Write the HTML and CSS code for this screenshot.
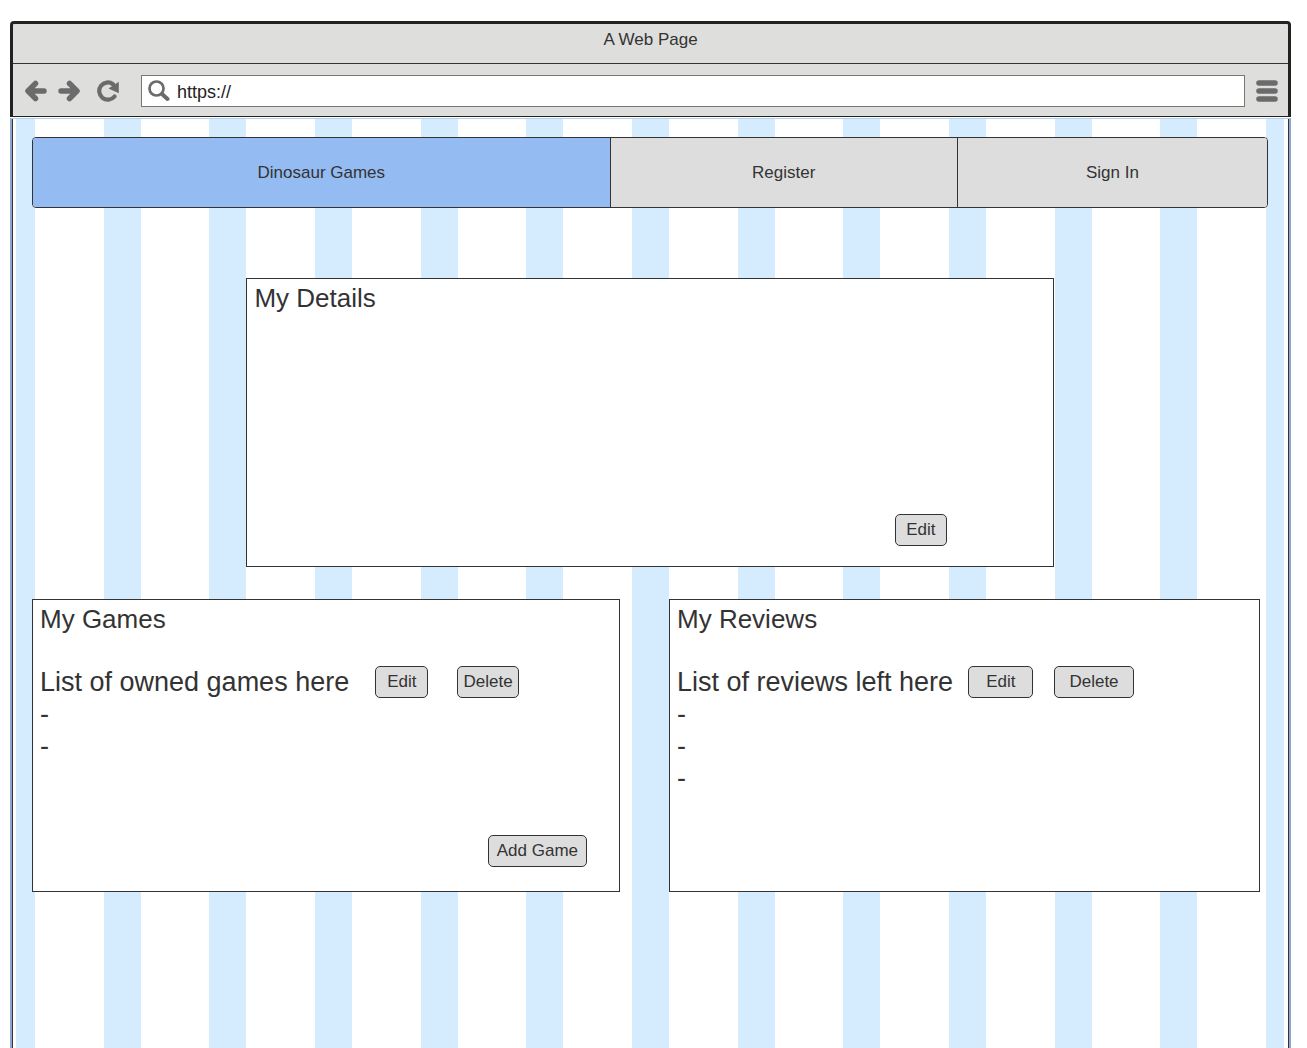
FILE: index.html
```html
<!DOCTYPE html>
<html lang="en">
<head>
<meta charset="utf-8">
<meta name="viewport" content="width=device-width, initial-scale=1">
<title>A Web Page</title>
<link rel="stylesheet" href="styles.css">
</head>
<body>
<div class="browser">
  <header class="chrome">
    <div class="titlebar">A Web Page</div>
    <div class="toolbar">
      <button class="icon-button" type="button" aria-label="Back">
        <svg width="22" height="22" viewBox="0 0 22 22"><path d="M19 11H4M10.500 3.500L3 11L10.500 18.500" fill="none" stroke="#6b6b6b" stroke-width="5.500" stroke-linecap="round" stroke-linejoin="round"/></svg>
      </button>
      <button class="icon-button" type="button" aria-label="Forward">
        <svg width="22" height="22" viewBox="0 0 22 22"><path d="M3 11H18M11.500 3.500L19 11L11.500 18.500" fill="none" stroke="#6b6b6b" stroke-width="5.500" stroke-linecap="round" stroke-linejoin="round"/></svg>
      </button>
      <button class="icon-button reload" type="button" aria-label="Reload">
        <svg width="22" height="22" viewBox="0 0 22 22"><path d="M17.500 16.500A8.600 8.600 0 1 1 16 4.200" fill="none" stroke="#6b6b6b" stroke-width="4.200" stroke-linecap="round"/><path d="M21.800 1.800V13.200L11.500 8.500Z" fill="#6b6b6b"/></svg>
      </button>
      <label class="address">
        <svg width="22" height="22" viewBox="0 0 22 22"><circle cx="8.500" cy="8.500" r="7" fill="none" stroke="#6b6b6b" stroke-width="2.700"/><path d="M14 14L19.500 19" stroke="#6b6b6b" stroke-width="4" stroke-linecap="round"/></svg>
        <input class="address-input" type="text" value="https://" aria-label="Address">
      </label>
      <button class="icon-button" type="button" aria-label="Menu">
        <svg width="22" height="22" viewBox="0 0 22 22"><path d="M3 3H19M3 11H19M3 19H19" stroke="#6b6b6b" stroke-width="5.600" stroke-linecap="round"/></svg>
      </button>
    </div>
  </header>
  <div class="frame">
    <main class="page">
      <nav class="nav">
        <a class="nav-link nav-home" href="#">Dinosaur Games</a>
        <a class="nav-link nav-register" href="#">Register</a>
        <a class="nav-link nav-signin" href="#">Sign In</a>
      </nav>
      <section class="panel details">
        <h2 class="heading">My Details</h2>
        <button class="button details-edit" type="button">Edit</button>
      </section>
      <div class="columns">
        <section class="panel">
          <h2 class="heading">My Games</h2>
          <div class="list-row games-row">
            <p class="list-title">List of owned games here</p>
            <div class="actions games-actions">
              <button class="button" type="button">Edit</button>
              <button class="button button-snug" type="button">Delete</button>
            </div>
          </div>
          <ul class="list">
            <li>-</li>
            <li>-</li>
          </ul>
          <button class="button add-game" type="button">Add Game</button>
        </section>
        <section class="panel">
          <h2 class="heading">My Reviews</h2>
          <div class="list-row reviews-row">
            <p class="list-title">List of reviews left here</p>
            <div class="actions reviews-actions">
              <button class="button button-wide" type="button">Edit</button>
              <button class="button button-roomy" type="button">Delete</button>
            </div>
          </div>
          <ul class="list">
            <li>-</li>
            <li>-</li>
            <li>-</li>
          </ul>
        </section>
      </div>
    </main>
  </div>
</div>
</body>
</html>
```
FILE: styles.css
```css
:root {
  --ink: #333;
  --grey: #ddd;
  --chrome: #dededd;
  --stripe: #d5ecff;
  --edge: #8ca6cd;
}

* {
  box-sizing: border-box;
}

body {
  margin: 0;
  background: #fff;
  color: var(--ink);
  font-family: "Liberation Sans", Arial, sans-serif;
  font-size: 17px;
}

.browser {
  display: flex;
  flex-direction: column;
  min-height: 100vh;
  padding: 21px 16px 0 10px;
}

.chrome {
  background: var(--chrome);
  border: 3px solid #222;
  border-bottom: 1px solid #222;
  border-radius: 4px 4px 0 0;
}

.titlebar {
  height: 40px;
  line-height: 32px;
  text-align: center;
  border-bottom: 1px solid var(--ink);
}

.toolbar {
  display: flex;
  align-items: center;
  height: 52px;
  padding: 2px 10px 0 12px;
  gap: 11px;
}

.icon-button {
  display: flex;
  padding: 0;
  border: 0;
  background: none;
}

.reload {
  margin: 0 11px 0 6px;
}

.address {
  display: flex;
  flex: 1;
  align-items: center;
  gap: 7px;
  height: 32px;
  padding: 0 6px;
  background: #fff;
  border: 1px solid #777;
}

.address-input {
  flex: 1;
  min-width: 0;
  padding: 3px 0 0;
  border: 0;
  background: none;
  color: #222;
  font: inherit;
  font-size: 18px;
}

.frame {
  display: flex;
  flex: 1;
  margin-top: 1px;
  border: solid var(--edge);
  border-width: 1px 2px 0;
  border-top-color: #b5cff0;
  background: linear-gradient(var(--ink), var(--ink)) left / 1px 100% no-repeat,
    linear-gradient(var(--ink), var(--ink)) right / 1px 100% no-repeat;
  padding: 0 5px 0 4px;
}

.page {
  flex: 1;
  min-width: 0;
  padding: 18px 16px 32px;
  background: repeating-linear-gradient(
    to right,
    var(--stripe) 0 19px,
    #fff 19px calc(100% / 12 - 18px),
    var(--stripe) calc(100% / 12 - 18px) calc(100% / 12)
  );
}

.nav {
  display: flex;
  border: 1px solid var(--ink);
  border-radius: 4px;
  overflow: hidden;
}

.nav-link {
  height: 69px;
  line-height: 69px;
  text-align: center;
  color: inherit;
  text-decoration: none;
  background: var(--grey);
}

.nav-link + .nav-link {
  border-left: 1px solid var(--ink);
}

.nav-home {
  flex: 578 0 0;
  background: #94bbf2;
}

.nav-register {
  flex: 347 0 0;
}

.nav-signin {
  flex: 310 0 0;
}

.panel {
  display: flex;
  flex-direction: column;
  min-width: 0;
  min-height: 293px;
  padding: 3px 7px;
  background: #fff;
  border: 1px solid var(--ink);
}

.details {
  width: 65.3%;
  min-height: 289px;
  margin: 70px auto 32px;
}

.heading {
  margin: 0;
  font-size: 26px;
  font-weight: 400;
  line-height: 32px;
}

.columns {
  display: grid;
  grid-template-columns: 588fr 591fr;
  gap: 49px;
  margin-right: 8px;
}

.list-row {
  display: flex;
  align-items: center;
  margin-top: 31px;
}

.games-row {
  gap: 26px;
}

.reviews-row {
  gap: 15px;
}

.list-title {
  margin: 0;
  font-size: 27px;
  line-height: 32px;
}

.actions {
  display: flex;
}

.games-actions {
  gap: 29px;
}

.reviews-actions {
  gap: 21px;
}

.list {
  margin: 0;
  padding: 0;
  list-style: none;
  font-size: 27px;
  line-height: 32px;
}

.button {
  height: 32px;
  padding: 0 11px 1px;
  border: 1px solid var(--ink);
  border-radius: 5px;
  background: var(--grey);
  color: inherit;
  font: inherit;
}

.button-snug {
  padding-inline: 5px;
}

.button-roomy {
  padding-inline: 14px;
}

.button-wide {
  padding-inline: 17px;
}

.details-edit {
  margin: auto 99px 17px auto;
  padding-inline: 10px;
}

.add-game {
  margin: auto 25px 21px auto;
  padding-inline: 8px;
}
```
